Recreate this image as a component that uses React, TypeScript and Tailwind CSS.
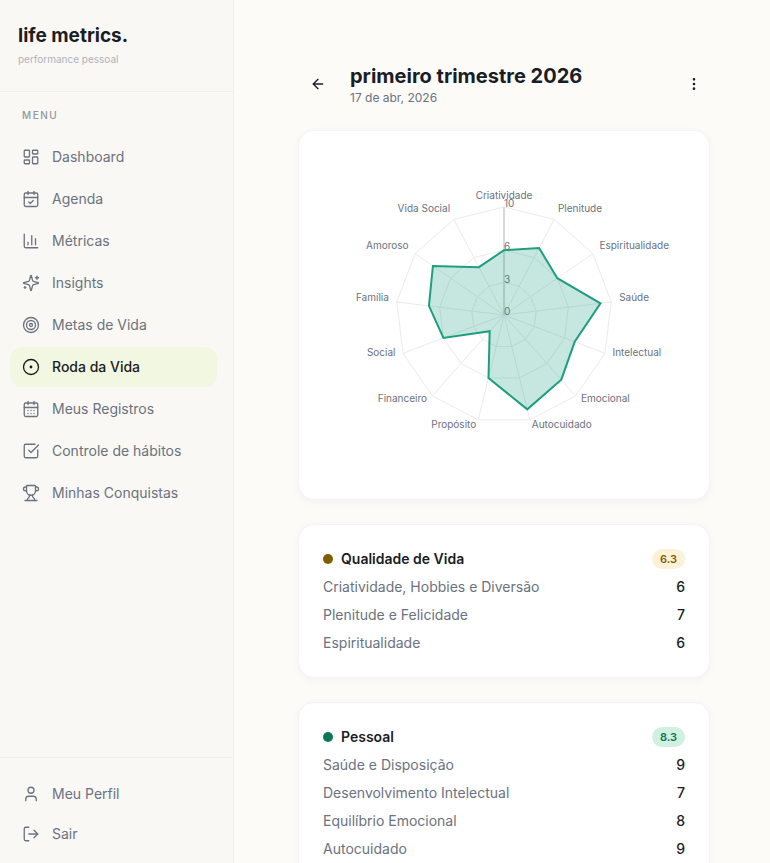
import {
  ArrowLeft,
  CalendarCheck,
  CalendarDays,
  ChartColumn,
  CircleDot,
  EllipsisVertical,
  LayoutDashboard,
  LogOut,
  SquareCheckBig,
  Target,
  Trophy,
  User,
} from 'lucide-react'

function SparklesIcon({ size = 18, strokeWidth = 1.75 }: { size?: number; strokeWidth?: number }) {
  return (
    <svg
      width={size}
      height={size}
      viewBox="0 0 24 24"
      fill="none"
      stroke="currentColor"
      strokeWidth={strokeWidth}
      strokeLinecap="round"
      strokeLinejoin="round"
    >
      <path d="M9.937 15.5A2 2 0 0 0 8.5 14.063l-6.135-1.582a.5.5 0 0 1 0-.962L8.5 9.936A2 2 0 0 0 9.937 8.5l1.582-6.135a.5.5 0 0 1 .963 0L14.063 8.5A2 2 0 0 0 15.5 9.937l6.135 1.581a.5.5 0 0 1 0 .964L15.5 14.063a2 2 0 0 0-1.437 1.437l-1.582 6.135a.5.5 0 0 1-.963 0z" />
      <path d="M20 3v4" />
      <path d="M22 5h-4" />
      <path d="M4 17v2" />
      <path d="M5 18H3" />
    </svg>
  )
}

const menu = [
  { label: 'Dashboard', icon: LayoutDashboard },
  { label: 'Agenda', icon: CalendarCheck },
  { label: 'Métricas', icon: ChartColumn },
  { label: 'Insights', icon: SparklesIcon },
  { label: 'Metas de Vida', icon: Target },
  { label: 'Roda da Vida', icon: CircleDot, active: true },
  { label: 'Meus Registros', icon: CalendarDays },
  { label: 'Controle de hábitos', icon: SquareCheckBig },
  { label: 'Minhas Conquistas', icon: Trophy },
]

const areas = [
  { name: 'Criatividade', value: 6 },
  { name: 'Plenitude', value: 7 },
  { name: 'Espiritualidade', value: 6 },
  { name: 'Saúde', value: 9 },
  { name: 'Intelectual', value: 7 },
  { name: 'Emocional', value: 8 },
  { name: 'Autocuidado', value: 9 },
  { name: 'Propósito', value: 6 },
  { name: 'Financeiro', value: 2 },
  { name: 'Social', value: 6 },
  { name: 'Família', value: 7 },
  { name: 'Amoroso', value: 8 },
  { name: 'Vida Social', value: 5 },
]

const groups = [
  {
    title: 'Qualidade de Vida',
    average: '6.3',
    dot: 'bg-[#7d5f00]',
    badge: 'bg-[#fdf1d8] text-[#7d5f00]',
    items: [
      { label: 'Criatividade, Hobbies e Diversão', value: 6 },
      { label: 'Plenitude e Felicidade', value: 7 },
      { label: 'Espiritualidade', value: 6 },
    ],
  },
  {
    title: 'Pessoal',
    average: '8.3',
    dot: 'bg-[#0f7655]',
    badge: 'bg-[#d0f0e0] text-[#0f7655]',
    items: [
      { label: 'Saúde e Disposição', value: 9 },
      { label: 'Desenvolvimento Intelectual', value: 7 },
      { label: 'Equilíbrio Emocional', value: 8 },
      { label: 'Autocuidado', value: 9 },
    ],
  },
]

const CX = 181
const CY = 160
const RADIUS = 108

function point(index: number, r: number) {
  const angle = (index * 2 * Math.PI) / areas.length
  return { x: CX + r * Math.sin(angle), y: CY - r * Math.cos(angle) }
}

function ring(radii: number[]) {
  return radii
    .map((r, i) => {
      const p = point(i, r)
      return `${p.x},${p.y}`
    })
    .join(' ')
}

function anchor(index: number) {
  if (index === 0) return 'middle'
  return index > areas.length / 2 ? 'end' : 'start'
}

function RadarChart() {
  return (
    <svg viewBox="0 0 362 320" className="w-full h-80" role="img" aria-label="Roda da Vida">
      <g fill="none" stroke="#ebebed">
        {[3, 6, 10].map((level) => (
          <polygon key={level} points={ring(areas.map(() => (level / 10) * RADIUS))} />
        ))}
        {areas.map((area, i) => {
          const p = point(i, RADIUS)
          return <line key={area.name} x1={CX} y1={CY} x2={p.x} y2={p.y} />
        })}
      </g>
      <line x1={CX} y1={CY} x2={CX} y2={CY - RADIUS} stroke="#d9d9d9" strokeWidth={2} />
      <g fontSize={10} fill="#6b7280">
        {[0, 3, 6, 10].map((level) => (
          <text key={level} x={CX} y={CY - (level / 10) * RADIUS}>
            {level}
          </text>
        ))}
      </g>
      <polygon
        points={ring(areas.map((area) => (area.value / 10) * RADIUS))}
        fill="#1d9e80"
        fillOpacity={0.25}
        stroke="#1d9e80"
        strokeWidth={2}
      />
      <g fontSize={10} fill="#6b7280">
        {areas.map((area, i) => {
          const p = point(i, RADIUS + 8)
          return (
            <text key={area.name} x={p.x} y={p.y} textAnchor={anchor(i)}>
              {area.name}
            </text>
          )
        })}
      </g>
    </svg>
  )
}

export default function App() {
  return (
    <div className="flex h-screen overflow-hidden bg-[#fcfbf7] font-['Inter',sans-serif] text-[#1a1d26]">
      <aside className="flex w-[234px] shrink-0 flex-col border-r border-[#efefed] bg-[#f9f8f4]">
        <div className="border-b border-[#efefed] px-[18px] pt-[22px] pb-[23px]">
          <p className="text-[19px] leading-7 font-bold">life metrics.</p>
          <p className="text-[10px] leading-[18px] text-[#b0b3ba]">performance pessoal</p>
        </div>

        <nav className="flex-1 pt-[15px] pr-4 pl-2.5">
          <p className="mb-3.5 px-3 text-[10px] leading-4 font-medium tracking-[1.5px] text-[#9297a2]">MENU</p>
          <ul className="space-y-0.5">
            {menu.map(({ label, icon: Icon, active }) => (
              <li key={label}>
                <a
                  href="#"
                  className={
                    active
                      ? 'flex h-10 items-center gap-3 rounded-xl bg-[#f2f7e1] px-3 text-sm font-medium text-[#1a1d1f]'
                      : 'flex h-10 items-center gap-3 rounded-xl px-3 text-sm text-[#6b7280]'
                  }
                >
                  <Icon size={18} strokeWidth={1.75} />
                  {label}
                </a>
              </li>
            ))}
          </ul>
        </nav>

        <div className="border-t border-[#efefed] pt-4 pr-4 pb-[9px] pl-2.5">
          <a href="#" className="flex h-10 items-center gap-3 px-3 text-sm text-[#6b7280]">
            <User size={18} strokeWidth={1.75} />
            Meu Perfil
          </a>
          <button className="flex h-10 w-full items-center gap-3 px-3 text-sm text-[#6b7280]">
            <LogOut size={18} strokeWidth={1.75} />
            Sair
          </button>
        </div>
      </aside>

      <main className="flex-1 overflow-y-auto pt-[62px] pr-[60px] pb-16 pl-16 [scrollbar-width:none]">
        <header className="mb-6 flex items-center">
          <button aria-label="Voltar" className="mr-3 flex size-10 items-center justify-center">
            <ArrowLeft size={16} />
          </button>
          <div className="flex-1">
            <h1 className="text-xl leading-7 font-bold">primeiro trimestre 2026</h1>
            <p className="text-xs text-[#6b7280]">17 de abr, 2026</p>
          </div>
          <button aria-label="Mais opções" className="flex size-8 items-center justify-center">
            <EllipsisVertical size={16} />
          </button>
        </header>

        <div className="space-y-6">
          <section className="rounded-2xl border border-[#f3f3f4] bg-white p-6 shadow-[0_2px_8px_rgba(0,0,0,0.04)]">
            <RadarChart />
          </section>

          {groups.map((group) => (
            <section
              key={group.title}
              className="space-y-2 rounded-2xl border border-[#f3f3f4] bg-white p-6 text-sm shadow-[0_2px_8px_rgba(0,0,0,0.04)]"
            >
              <div className="flex items-center">
                <span className={`mr-2 size-2.5 rounded-full ${group.dot}`} />
                <h2 className="flex-1 font-semibold">{group.title}</h2>
                <span className={`rounded-full px-2 text-[11px] leading-5 font-semibold ${group.badge}`}>
                  {group.average}
                </span>
              </div>
              {group.items.map((item) => (
                <div key={item.label} className="flex justify-between">
                  <span className="text-[#6b7280]">{item.label}</span>
                  <span className="font-medium">{item.value}</span>
                </div>
              ))}
            </section>
          ))}
        </div>
      </main>
    </div>
  )
}
